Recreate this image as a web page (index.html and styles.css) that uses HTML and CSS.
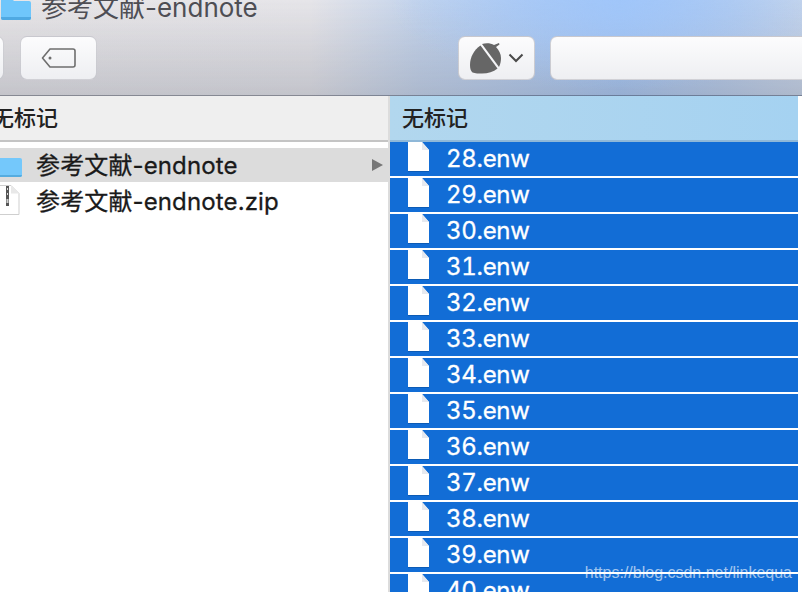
FILE: index.html
```html
<!DOCTYPE html>
<html lang="zh">
<head>
<meta charset="utf-8">
<title>参考文献-endnote</title>
<link rel="stylesheet" href="styles.css">
</head>
<body>
<div class="window">
  <header class="toolbar">
    <div class="titlebar">
      <svg class="title-folder" width="32" height="24" viewBox="0 0 32 24"><path d="M1 3a2 2 0 0 1 2-2h8l3 3h15a2 2 0 0 1 2 2v15a2 2 0 0 1-2 2H3a2 2 0 0 1-2-2z" fill="#6fc6fb"/><path d="M1 21a2 2 0 0 0 2 2h26a2 2 0 0 0 2-2v-1H1z" fill="#4fa9e2"/></svg>
      <span class="title-text">参考文献-endnote</span>
    </div>
    <div class="controls">
      <div class="btn btn-cut"></div>
      <div class="btn btn-tag">
        <svg width="36" height="22" viewBox="0 0 36 22"><path d="M9 2h23a2 2 0 0 1 2 2v14a2 2 0 0 1-2 2H9L1.500 11z" fill="none" stroke="#6e6e6e" stroke-width="1.600" stroke-linejoin="round"/><circle cx="9" cy="11" r="1.500" fill="#6e6e6e"/></svg>
      </div>
      <div class="btn btn-acorn">
        <svg width="33" height="31" viewBox="0 0 33 31"><path d="M12 1c4-1.500 9-1 12 1l5-2 .5 1.500-3.500 2.500c3 3 5 7 5 11 0 3-.5 6-2 9z" fill="#666"/><path d="M10.500 2.500L27.500 25.500c-4 3.500-9.500 5-15.500 5-3 0-7 0-9.500-1C.5 28 0 25 0 22c0-8 4-15 10.500-19.500z" fill="#666"/></svg>
        <svg width="16" height="10" viewBox="0 0 16 10"><path d="M1.500 1.500L8 8l6.500-6.500" fill="none" stroke="#4a4a4a" stroke-width="2"/></svg>
      </div>
      <div class="btn btn-search"></div>
    </div>
  </header>
  <main class="panes">
    <section class="pane pane-left">
      <div class="col-head col-head-left"><span class="head-label-left">无标记</span></div>
      <ul class="list-left">
        <li class="left-row left-row-active">
          <svg class="left-icon" width="36" height="24" viewBox="0 0 36 24"><path d="M0 2h9l3 3h21a2 2 0 0 1 2 2v15a2 2 0 0 1-2 2H0z" fill="#74c8fb"/><path d="M0 22h35a2 2 0 0 1-2 2H0z" fill="#55acdf"/></svg>
          <span class="left-label left-label-active">参考文献-endnote</span>
          <svg class="arrow" width="13" height="14" viewBox="0 0 13 14"><path d="M1 1l11 6-11 6z" fill="#777"/></svg>
        </li>
        <li class="left-row">
          <svg class="left-icon" width="36" height="32" viewBox="0 0 36 32"><path d="M0 1.500h24l8 8v21H0z" fill="#fff" stroke="#cfcfcf"/><path d="M24 1.500v8h8z" fill="#e8e8e8"/><rect x="19" y="2" width="3" height="20" fill="#555"/><rect x="20" y="4" width="1" height="2" fill="#ddd"/><rect x="20" y="9" width="1" height="2" fill="#ddd"/><rect x="19.500" y="15" width="2" height="4" fill="#ccc"/></svg>
          <span class="left-label">参考文献-endnote.zip</span>
        </li>
      </ul>
    </section>
    <section class="pane pane-right">
      <div class="col-head col-head-right"><span>无标记</span></div>
      <ul class="list-right">
        <li class="file-row"><svg class="file-icon" width="23" height="30" viewBox="0 0 23 30"><path d="M1 29h21v1H1z" fill="#0c5bb5"/><path d="M1 0h14l7 8v21H1z" fill="#fff"/><path d="M15 0l7 8h-7z" fill="#e6e9ef"/></svg><span>28.enw</span></li>
        <li class="file-row"><svg class="file-icon" width="23" height="30" viewBox="0 0 23 30"><path d="M1 29h21v1H1z" fill="#0c5bb5"/><path d="M1 0h14l7 8v21H1z" fill="#fff"/><path d="M15 0l7 8h-7z" fill="#e6e9ef"/></svg><span>29.enw</span></li>
        <li class="file-row"><svg class="file-icon" width="23" height="30" viewBox="0 0 23 30"><path d="M1 29h21v1H1z" fill="#0c5bb5"/><path d="M1 0h14l7 8v21H1z" fill="#fff"/><path d="M15 0l7 8h-7z" fill="#e6e9ef"/></svg><span>30.enw</span></li>
        <li class="file-row"><svg class="file-icon" width="23" height="30" viewBox="0 0 23 30"><path d="M1 29h21v1H1z" fill="#0c5bb5"/><path d="M1 0h14l7 8v21H1z" fill="#fff"/><path d="M15 0l7 8h-7z" fill="#e6e9ef"/></svg><span>31.enw</span></li>
        <li class="file-row"><svg class="file-icon" width="23" height="30" viewBox="0 0 23 30"><path d="M1 29h21v1H1z" fill="#0c5bb5"/><path d="M1 0h14l7 8v21H1z" fill="#fff"/><path d="M15 0l7 8h-7z" fill="#e6e9ef"/></svg><span>32.enw</span></li>
        <li class="file-row"><svg class="file-icon" width="23" height="30" viewBox="0 0 23 30"><path d="M1 29h21v1H1z" fill="#0c5bb5"/><path d="M1 0h14l7 8v21H1z" fill="#fff"/><path d="M15 0l7 8h-7z" fill="#e6e9ef"/></svg><span>33.enw</span></li>
        <li class="file-row"><svg class="file-icon" width="23" height="30" viewBox="0 0 23 30"><path d="M1 29h21v1H1z" fill="#0c5bb5"/><path d="M1 0h14l7 8v21H1z" fill="#fff"/><path d="M15 0l7 8h-7z" fill="#e6e9ef"/></svg><span>34.enw</span></li>
        <li class="file-row"><svg class="file-icon" width="23" height="30" viewBox="0 0 23 30"><path d="M1 29h21v1H1z" fill="#0c5bb5"/><path d="M1 0h14l7 8v21H1z" fill="#fff"/><path d="M15 0l7 8h-7z" fill="#e6e9ef"/></svg><span>35.enw</span></li>
        <li class="file-row"><svg class="file-icon" width="23" height="30" viewBox="0 0 23 30"><path d="M1 29h21v1H1z" fill="#0c5bb5"/><path d="M1 0h14l7 8v21H1z" fill="#fff"/><path d="M15 0l7 8h-7z" fill="#e6e9ef"/></svg><span>36.enw</span></li>
        <li class="file-row"><svg class="file-icon" width="23" height="30" viewBox="0 0 23 30"><path d="M1 29h21v1H1z" fill="#0c5bb5"/><path d="M1 0h14l7 8v21H1z" fill="#fff"/><path d="M15 0l7 8h-7z" fill="#e6e9ef"/></svg><span>37.enw</span></li>
        <li class="file-row"><svg class="file-icon" width="23" height="30" viewBox="0 0 23 30"><path d="M1 29h21v1H1z" fill="#0c5bb5"/><path d="M1 0h14l7 8v21H1z" fill="#fff"/><path d="M15 0l7 8h-7z" fill="#e6e9ef"/></svg><span>38.enw</span></li>
        <li class="file-row"><svg class="file-icon" width="23" height="30" viewBox="0 0 23 30"><path d="M1 29h21v1H1z" fill="#0c5bb5"/><path d="M1 0h14l7 8v21H1z" fill="#fff"/><path d="M15 0l7 8h-7z" fill="#e6e9ef"/></svg><span>39.enw</span></li>
        <li class="file-row"><svg class="file-icon" width="23" height="30" viewBox="0 0 23 30"><path d="M1 29h21v1H1z" fill="#0c5bb5"/><path d="M1 0h14l7 8v21H1z" fill="#fff"/><path d="M15 0l7 8h-7z" fill="#e6e9ef"/></svg><span>40.enw</span></li>
      </ul>
    </section>
  </main>
  <div class="watermark">https://blog.csdn.net/linkequa</div>
</div>
</body>
</html>
```

FILE: styles.css
```css
* { box-sizing: border-box; }
html, body { margin: 0; padding: 0; height: 100%; overflow: hidden; background: #fff; }
body { font-family: Inter, "Noto Sans CJK SC", sans-serif; }
ul { list-style: none; margin: 0; padding: 0; }
.window { position: relative; width: 802px; height: 592px; overflow: hidden; display: flex; flex-direction: column; }
.toolbar {
  height: 96px; flex: none; overflow: hidden;
  border-bottom: 1px solid rgba(70,75,90,.6);
  background:
    radial-gradient(ellipse 230px 90px at 620px 0, rgba(160,198,250,.95), rgba(160,198,250,0) 100%),
    linear-gradient(180deg, rgba(232,230,232,0) 0%, rgba(115,120,135,.3) 100%),
    linear-gradient(90deg, #e8e6e8 0, #e6e5e9 310px, #c4d4ec 420px, #a6c6f3 620px, #b8cdec 720px, #c9d6ea 802px);
}
.titlebar { height: 36px; display: flex; align-items: flex-start; gap: 9px; }
.title-folder { flex: none; margin-top: -3px; }
.title-text { font-size: 26px; line-height: 26px; margin-top: -5px; color: #4e4e54; white-space: nowrap; }
.controls { display: flex; height: 44px; }
.btn {
  height: 44px; border-radius: 7px; flex: none;
  border: 1px solid rgba(130,130,140,.35);
  background: linear-gradient(180deg, #fcfcfd, #eeeff2);
  display: flex; align-items: center; justify-content: center;
}
.btn-cut { width: 20px; margin-left: -16px; }
.btn-tag { width: 77px; margin-left: 16px; }
.btn-acorn { width: 77px; margin-left: 361px; gap: 5px; }
.btn-search { width: 280px; margin-left: 15px; }
.panes { flex: 1; display: flex; min-height: 0; }
.pane { overflow: hidden; }
.pane-left { width: 388px; flex: none; }
.pane-right { width: 410px; flex: none; border-left: 2px solid #dcdcdc; }
.col-head { height: 46px; display: flex; align-items: center; font-size: 22px; font-weight: 500; color: #222; padding-bottom: 4px; white-space: nowrap; }
.col-head-left { background: #efefef; border-bottom: 2px solid #c4c4c4; }
.head-label-left { margin-left: -8px; }
.col-head-right { background: linear-gradient(90deg, #b2d7ee, #a5d2f1); border-bottom: 2px solid #8fb8d8; padding-left: 12px; }
.list-left { padding-top: 6px; }
.left-row { height: 36px; display: flex; align-items: center; font-size: 24px; color: #1a1a1a; white-space: nowrap; }
.left-row-active { height: 34px; background: #dcdcdc; }
.left-label { padding-bottom: 1px; letter-spacing: .13px; -webkit-text-stroke: .3px #1a1a1a; }
.left-label-active { padding-bottom: 3px; }
.left-icon { flex: none; margin-left: -13px; margin-right: 13px; }
.arrow { margin-left: auto; margin-right: 4px; }
.list-right { display: flex; flex-direction: column; gap: 2px; }
.file-row { height: 34px; flex: none; display: flex; align-items: center; background: #126dd6; color: #fff; font-size: 24px; font-variant-numeric: tabular-nums; padding-left: 17px; }
.file-row span { padding-bottom: 2px; margin-left: -1px; letter-spacing: -.3px; -webkit-text-stroke: .3px #fff; }
.file-icon { flex: none; align-self: flex-start; margin-right: 17px; }
.watermark { position: absolute; right: 10px; bottom: 10px; font: 16px "Liberation Sans", sans-serif; color: rgba(255,255,255,.62); }
```
